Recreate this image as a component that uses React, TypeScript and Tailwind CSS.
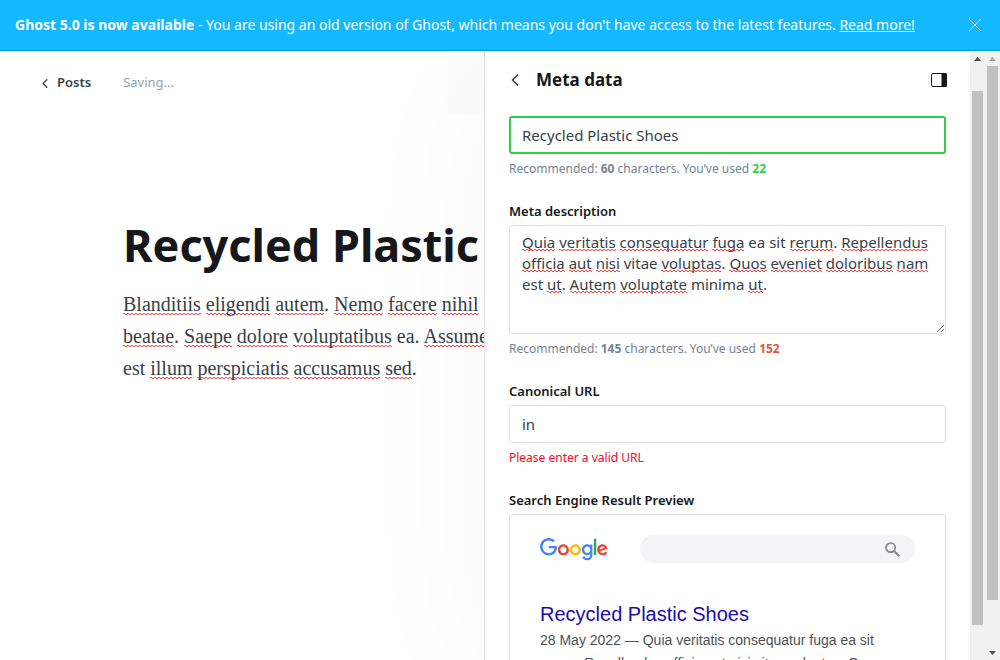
import { useMemo, useState } from "react";
import type { ReactNode } from "react";

const TITLE = "Recycled Plastic Shoes";
const DESCRIPTION =
  "Quia veritatis consequatur fuga ea sit rerum. Repellendus officia aut nisi vitae voluptas. Quos eveniet doloribus nam est ut. Autem voluptate minima ut.";
const KNOWN_WORDS = new Set(["ea", "sit", "vitae", "est", "minima"]);

const EXCERPT = [
  "Blanditiis eligendi autem. Nemo facere nihil",
  "beatae. Saepe dolore voluptatibus ea. Assumenda",
  "est illum perspiciatis accusamus sed.",
];

const SQUIGGLE =
  "bg-[linear-gradient(90deg,#ff3b3b_50%,transparent_50%),linear-gradient(90deg,transparent_50%,#ff3b3b_50%)] bg-[length:4px_1px,4px_1px] bg-[position:left_bottom_1px,left_bottom] bg-repeat-x";

function isMisspelled(word: string) {
  return word.length > 0 && !KNOWN_WORDS.has(word);
}

/** Underlines every word the dictionary does not know. */
function SpellChecked({ text }: { text: string }) {
  return (
    <>
      {text.split(/([A-Za-z]+)/).map((part, i) =>
        /^[A-Za-z]+$/.test(part) && isMisspelled(part) ? (
          <span key={i} className={SQUIGGLE}>
            {part}
          </span>
        ) : (
          part
        ),
      )}
    </>
  );
}

/** Spelling marks that lie over a text box: blanks as wide as the words, wrapped the same way. */
function SpellingMarks({ text, font }: { text: string; font: string }) {
  const words = useMemo(() => {
    const context = document.createElement("canvas").getContext("2d");
    if (!context) return [];
    context.font = font;
    return text.split(" ").map((token) => {
      const word = token.replace(/[^A-Za-z]+$/, "");
      const wordWidth = context.measureText(word).width;
      return { word, wordWidth, restWidth: context.measureText(token).width - wordWidth };
    });
  }, [text, font]);

  return (
    <>
      {words.map(({ word, wordWidth, restWidth }, i) => (
        <span key={i}>
          <span className="inline-flex h-[21px] align-top">
            <span className={isMisspelled(word) ? `h-[19px] ${SQUIGGLE}` : "h-[19px]"} style={{ width: wordWidth }} />
            <span style={{ width: restWidth }} />
          </span>{" "}
        </span>
      ))}
    </>
  );
}

function Chevron({ className }: { className: string }) {
  return (
    <svg viewBox="0 0 8 12" className={className} fill="none" stroke="currentColor" strokeWidth="1.6" strokeLinecap="round" strokeLinejoin="round" aria-hidden="true">
      <path d="M6.5 1 1.5 6l5 5" />
    </svg>
  );
}

function GoogleLogo() {
  return (
    <svg viewBox="0 0 272 92" className="h-[23px] w-[68px] shrink-0" role="img" aria-label="Google">
      <path fill="#EA4335" d="M115.75 47.18c0 12.77-9.99 22.18-22.25 22.18s-22.25-9.41-22.25-22.18C71.25 34.32 81.24 25 93.5 25s22.25 9.32 22.25 22.18zm-9.74 0c0-7.98-5.79-13.44-12.51-13.44S80.99 39.2 80.99 47.18c0 7.9 5.79 13.44 12.51 13.44s12.51-5.55 12.51-13.44z" />
      <path fill="#FBBC05" d="M163.75 47.18c0 12.77-9.99 22.18-22.25 22.18s-22.25-9.41-22.25-22.18c0-12.85 9.99-22.18 22.25-22.18s22.25 9.32 22.25 22.18zm-9.74 0c0-7.98-5.79-13.44-12.51-13.44s-12.51 5.46-12.51 13.44c0 7.9 5.79 13.44 12.51 13.44s12.51-5.55 12.51-13.44z" />
      <path fill="#4285F4" d="M209.75 26.34v39.82c0 16.38-9.66 23.07-21.08 23.07-10.75 0-17.22-7.19-19.66-13.07l8.48-3.53c1.51 3.61 5.21 7.87 11.17 7.87 7.31 0 11.84-4.51 11.84-13v-3.19h-.34c-2.18 2.69-6.38 5.04-11.68 5.04-11.09 0-21.25-9.66-21.25-22.09 0-12.52 10.16-22.26 21.25-22.26 5.29 0 9.49 2.35 11.68 4.96h.34v-3.61h9.25zm-8.56 20.92c0-7.81-5.21-13.52-11.84-13.52-6.72 0-12.35 5.71-12.35 13.52 0 7.73 5.63 13.36 12.35 13.36 6.63 0 11.84-5.63 11.84-13.36z" />
      <path fill="#34A853" d="M225 3v65h-9.5V3h9.5z" />
      <path fill="#EA4335" d="M262.02 54.48l7.56 5.04c-2.44 3.61-8.32 9.83-18.48 9.83-12.6 0-22.01-9.74-22.01-22.18 0-13.19 9.49-22.18 20.92-22.18 11.51 0 17.14 9.16 18.98 14.11l1.01 2.52-29.65 12.28c2.27 4.45 5.8 6.72 10.75 6.72 4.96 0 8.4-2.44 10.92-6.14zm-23.27-7.98l19.82-8.23c-1.09-2.77-4.37-4.7-8.23-4.7-4.95 0-11.84 4.37-11.59 12.93z" />
      <path fill="#4285F4" d="M35.29 41.41V32H67c.31 1.64.47 3.58.47 5.68 0 7.06-1.93 15.79-8.15 22.01-6.05 6.3-13.78 9.66-24.02 9.66C16.32 69.35.36 53.89.36 34.91.36 15.93 16.32.47 35.3.47c10.5 0 17.98 4.12 23.6 9.49l-6.64 6.64c-4.03-3.78-9.49-6.72-16.97-6.72-13.86 0-24.7 11.17-24.7 25.03 0 13.86 10.84 25.03 24.7 25.03 8.99 0 14.11-3.61 17.39-6.89 2.66-2.66 4.41-6.46 5.1-11.65l-22.49.01z" />
    </svg>
  );
}

function Arrow({ down = false, muted = false }: { down?: boolean; muted?: boolean }) {
  return (
    <svg viewBox="0 0 15 15" className={muted ? "h-[15px] w-[15px] shrink-0 text-[#a3a3a3]" : "h-[15px] w-[15px] shrink-0 text-[#505050]"} aria-hidden="true">
      <path fill="currentColor" d={down ? "M4 6h7L7.5 10z" : "M4 10h7L7.5 6z"} />
    </svg>
  );
}

function Label({ htmlFor, children }: { htmlFor: string; children: ReactNode }) {
  return (
    <label htmlFor={htmlFor} className="mb-1 block text-[13px] leading-[20px] font-semibold text-[#15171a]">
      {children}
    </label>
  );
}

function Hint({ limit, used, over = false }: { limit: number; used: number; over?: boolean }) {
  return (
    <p className="mt-[5px] text-[12px] leading-[20px] text-[#738393]">
      Recommended: <b>{limit}</b> characters. You’ve used{" "}
      <b className={over ? "text-[#e25440]" : "text-[#30cf43]"}>{used}</b>
    </p>
  );
}

export default function App() {
  const [title, setTitle] = useState(TITLE);
  const [description, setDescription] = useState(DESCRIPTION);
  const [url, setUrl] = useState("in");

  return (
    <div className="flex h-screen flex-col overflow-hidden bg-white font-['Noto_Sans',sans-serif]">
      <aside className="relative z-20 flex h-[51px] shrink-0 items-center justify-between border-b border-[#009fe3] bg-[#14b8ff] px-[15px] text-[14px] leading-[20px] text-white">
        <p className="whitespace-nowrap">
          <b>Ghost 5.0 is now available</b> - You are using an old version of Ghost, which means you don't have access to the latest features.{" "}
          <a href="#upgrade" className="underline">Read more!</a>
        </p>
        <button type="button" aria-label="Dismiss" className="px-1">
          <svg viewBox="0 0 12 12" className="h-3 w-3" stroke="currentColor" strokeWidth="0.8" aria-hidden="true">
            <path d="M0 0 12 12M12 0 0 12" />
          </svg>
        </button>
      </aside>

      <div className="flex min-h-0 flex-1">
        <main className="min-w-0 flex-1 overflow-hidden whitespace-nowrap">
          <header className="flex h-16 items-center pl-[42px] text-[13px]">
            <a href="#posts" className="mr-8 flex items-center gap-[9px] font-semibold text-[#394047]">
              <Chevron className="h-[9px] w-[6px]" />
              Posts
            </a>
            <span className="text-[#95a1ad]">Saving...</span>
            <div className="ml-auto w-9 self-stretch bg-black/1" />
          </header>
          <article className="pt-[98px] pl-[123px]">
            <h1 className="text-[45px] leading-[64px] font-bold text-[#15171a]">{TITLE}</h1>
            <p className="mt-[11px] font-['Liberation_Serif',serif] text-[20px] leading-[32px] text-[#394047]">
              {EXCERPT.map((line) => (
                <span key={line} className="block">
                  <SpellChecked text={line} />
                </span>
              ))}
            </p>
          </article>
        </main>

        <section aria-label="Meta data" className="relative z-10 flex w-[501px] shrink-0 border-l border-[#dfe3e9] bg-white shadow-[0_20px_140px_rgba(0,0,0,0.04)]">
          <div className="min-w-0 flex-1 overflow-hidden px-6">
            <header className="flex h-[58px] items-center">
              <button type="button" aria-label="Back" className="mr-[17px] ml-[2px] text-[#394047]">
                <Chevron className="h-3 w-2" />
              </button>
              <h2 className="text-[17px] leading-[24px] font-bold text-[#15171a]">Meta data</h2>
              <button type="button" aria-label="Toggle sidebar" className="-mr-px ml-auto text-[#15171a]">
                <svg viewBox="0 0 16 14" className="h-[14px] w-4" aria-hidden="true">
                  <rect x="0.5" y="0.5" width="15" height="13" rx="1.5" fill="none" stroke="currentColor" />
                  <path d="M10.500 0h4a1.500 1.500 0 0 1 1.500 1.500v11a1.500 1.500 0 0 1-1.500 1.500h-4z" fill="currentColor" />
                </svg>
              </button>
            </header>

            <form className="flex flex-col gap-[22px] pt-[7px]">
              <div>
                <input
                  aria-label="Meta title"
                  value={title}
                  onChange={(e) => setTitle(e.target.value)}
                  className="block h-[38px] w-full rounded-[3px] border-2 border-[#30cf43] px-[11px] text-[15px] leading-[20px] text-[#394047] outline-none"
                />
                <Hint limit={60} used={22} />
              </div>

              <div>
                <Label htmlFor="description">Meta description</Label>
                <div className="relative">
                  <textarea
                    id="description"
                    value={description}
                    spellCheck={false}
                    onChange={(e) => setDescription(e.target.value)}
                    className="block h-[109px] w-full resize-y rounded-[3px] border border-[#dddfe1] px-3 py-[6px] text-[15px] leading-[21px] text-[#394047] outline-none"
                  />
                  <div aria-hidden="true" className="pointer-events-none absolute inset-0 overflow-hidden border border-transparent px-3 py-[6px] text-[15px] leading-[21px]">
                    <SpellingMarks text={description} font="15px 'Noto Sans'" />
                  </div>
                </div>
                <Hint limit={145} used={152} over />
              </div>

              <div>
                <Label htmlFor="canonical">Canonical URL</Label>
                <input
                  id="canonical"
                  value={url}
                  onChange={(e) => setUrl(e.target.value)}
                  className="block h-[38px] w-full rounded-[3px] border border-[#dddfe1] px-3 text-[15px] leading-[20px] text-[#394047] outline-none"
                />
                <p className="mt-[5px] text-[12px] leading-[20px] text-[#f50b23]">Please enter a valid URL</p>
              </div>

              <div>
                <h3 className="mb-1 text-[13px] leading-[20px] font-semibold text-[#15171a]">Search Engine Result Preview</h3>
                <div className="rounded-[3px] border border-[#dfe3e7] px-[30px] py-5 font-['Liberation_Sans',sans-serif]">
                  <div className="flex items-center gap-8">
                    <GoogleLogo />
                    <div className="flex h-7 flex-1 items-center justify-end rounded-full bg-[#f3f4f6] pr-[15px] text-[#80868b]">
                      <svg viewBox="0 0 15 15" className="h-[15px] w-[15px]" fill="none" stroke="currentColor" strokeWidth="1.7" aria-hidden="true">
                        <circle cx="5.600" cy="5.600" r="4.600" />
                        <path d="M9 9l5.300 5.300" strokeWidth="2" />
                      </svg>
                    </div>
                  </div>
                  <a href="#result" className="mt-[38px] block text-[20px] leading-[26px] text-[#1a0dab]">{title}</a>
                  <p className="mt-[2px] text-[14px] leading-[23px] text-[#4d5156]">28 May 2022 — {description}</p>
                </div>
              </div>
            </form>
          </div>
          <div className="flex w-[15px] shrink-0 flex-col items-center bg-[#f1f1f1]" aria-hidden="true">
            <Arrow />
            <div className="flex-[25]" />
            <div className="w-[11px] flex-[534] bg-[#c1c1c1]" />
            <div className="flex-[35]" />
          </div>
        </section>
        <div className="relative z-20 flex w-[15px] shrink-0 flex-col items-center bg-[#f1f1f1]" aria-hidden="true">
          <Arrow muted />
          <div className="w-[11px] flex-[534] bg-[#c1c1c1]" />
          <div className="flex-[45]" />
          <Arrow down />
        </div>
      </div>
    </div>
  );
}
